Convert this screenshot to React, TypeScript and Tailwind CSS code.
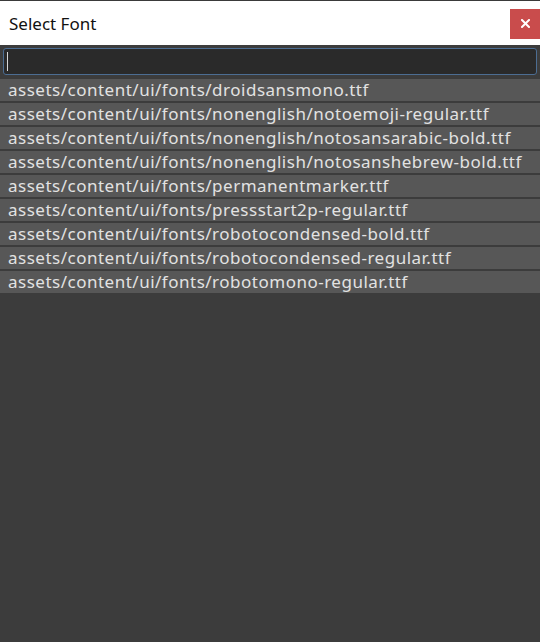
import React from "react";

const fonts = [
  "assets/content/ui/fonts/droidsansmono.ttf",
  "assets/content/ui/fonts/nonenglish/notoemoji-regular.ttf",
  "assets/content/ui/fonts/nonenglish/notosansarabic-bold.ttf",
  "assets/content/ui/fonts/nonenglish/notosanshebrew-bold.ttf",
  "assets/content/ui/fonts/permanentmarker.ttf",
  "assets/content/ui/fonts/pressstart2p-regular.ttf",
  "assets/content/ui/fonts/robotocondensed-bold.ttf",
  "assets/content/ui/fonts/robotocondensed-regular.ttf",
  "assets/content/ui/fonts/robotomono-regular.ttf",
];

export default function App() {
  return (
    <div
      className="w-[540px] h-[642px] flex flex-col bg-[#3c3c3c] overflow-hidden"
      style={{ fontFamily: '"Noto Sans", "Open Sans", sans-serif' }}
    >
      <div className="h-[45px] bg-white border-t border-[#3a3a3a] flex items-center justify-between shrink-0">
        <span className="pl-[9px] text-[17px] text-[#111] leading-none">Select Font</span>
        <button className="w-[30px] h-[30px] bg-[#c94c4c] flex items-center justify-center mt-[1px]">
          <svg width="9" height="9" viewBox="0 0 9 9">
            <path d="M1 1L8 8M8 1L1 8" stroke="white" strokeWidth="2" strokeLinecap="square" />
          </svg>
        </button>
      </div>
      <div className="px-[3px] pt-[3px] pb-[4px]">
        <div className="h-[27px] rounded-[3px] border border-[#4c6d92] bg-[#2a2a2a] flex items-center pl-[3px]">
          <div className="w-[1px] h-[19px] bg-[#d8d8d8]" />
        </div>
      </div>
      <div className="flex flex-col gap-[2px]">
        {fonts.map((f) => (
          <div
            key={f}
            className="h-[22px] bg-[#575757] text-[#e2e2e2] text-[17px] tracking-[0.5px] leading-[22px] pl-[8px] whitespace-nowrap"
          >
            {f}
          </div>
        ))}
      </div>
    </div>
  );
}
